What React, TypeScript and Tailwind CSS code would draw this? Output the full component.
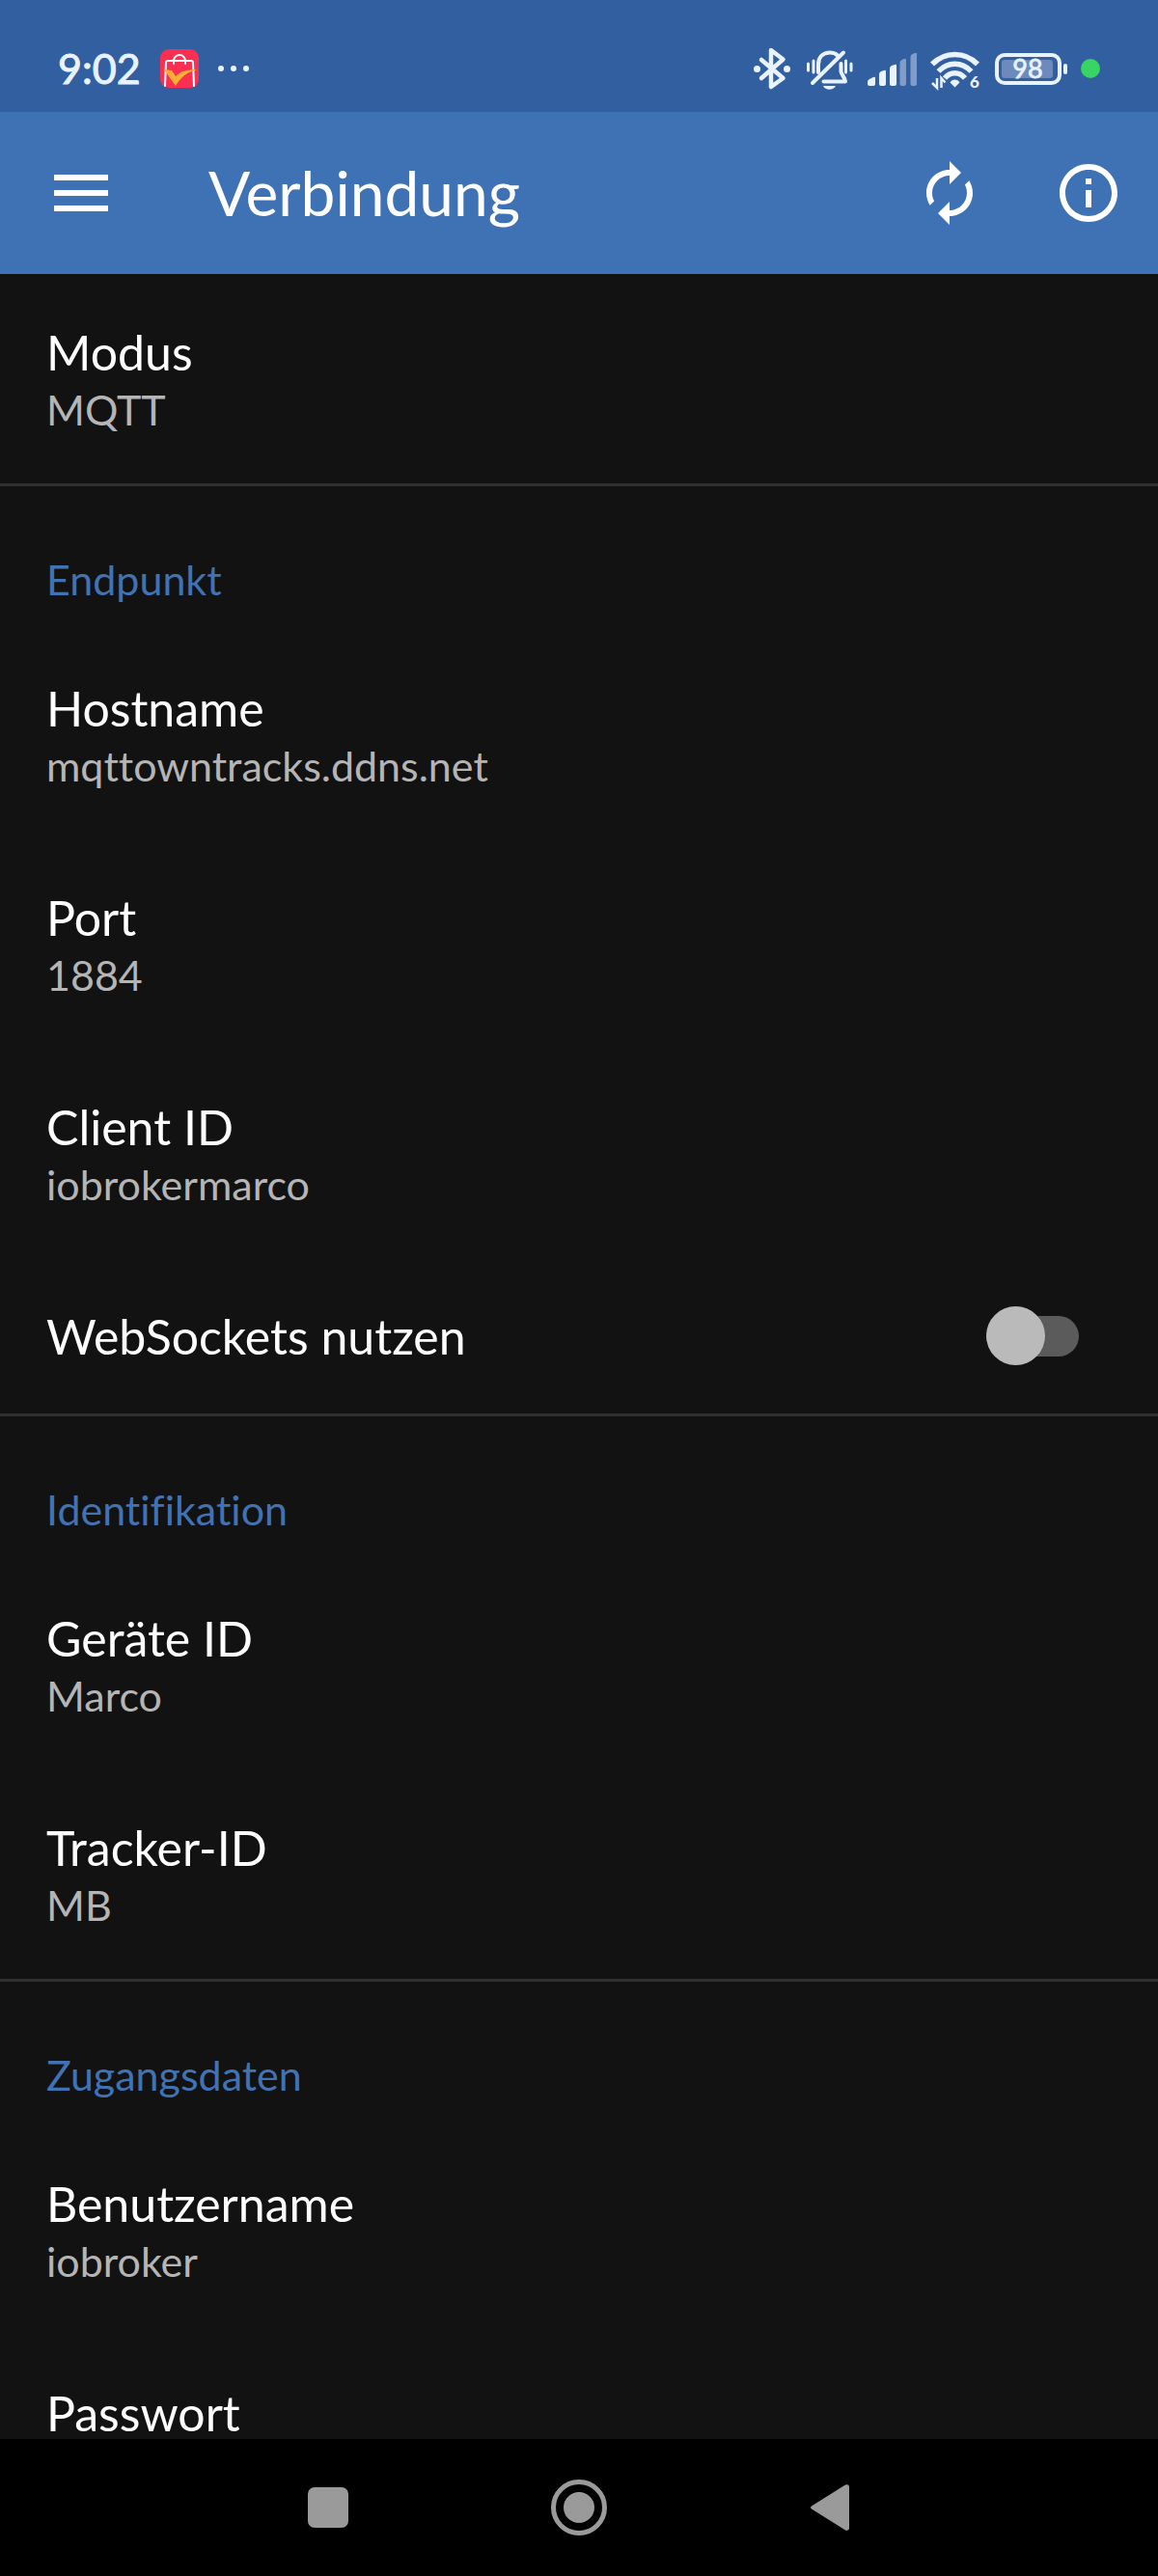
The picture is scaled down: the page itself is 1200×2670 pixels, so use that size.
import React, { useState } from "react";

type Item = {
  title: string;
  summary?: string;
  toggle?: boolean;
};

type Group = {
  heading?: string;
  items: Item[];
};

const groups: Group[] = [
  { items: [{ title: "Modus", summary: "MQTT" }] },
  {
    heading: "Endpunkt",
    items: [
      { title: "Hostname", summary: "mqttowntracks.ddns.net" },
      { title: "Port", summary: "1884" },
      { title: "Client ID", summary: "iobrokermarco" },
      { title: "WebSockets nutzen", toggle: true },
    ],
  },
  {
    heading: "Identifikation",
    items: [
      { title: "Geräte ID", summary: "Marco" },
      { title: "Tracker-ID", summary: "MB" },
    ],
  },
  {
    heading: "Zugangsdaten",
    items: [
      { title: "Benutzername", summary: "iobroker" },
      { title: "Passwort" },
    ],
  },
];

const ShopIcon = () => (
  <svg width="40" height="40" viewBox="0 0 40 40" fill="none">
    <rect width="40" height="40" rx="9" fill="#fb2f52" />
    <path
      d="M5 38l1-24a2 2 0 0 1 2-2h24a2 2 0 0 1 2 2l1 24M14 15v-3a6 6 0 0 1 12 0v3"
      stroke="#fff"
      strokeWidth="2"
      strokeLinecap="round"
    />
    <path d="M4 21l8 1 4 6c5-5 12-7 22-7-10 3-17 8-22 17z" fill="#fdb02f" />
  </svg>
);

const BluetoothIcon = () => (
  <svg width="38" height="44" viewBox="0 0 38 44" fill="none" className="overflow-visible">
    <path
      d="M7 13l22.500 19L17 41V3l12.500 9.500L7 32"
      stroke="#e9f2ff"
      strokeWidth="4.500"
      strokeLinecap="round"
      strokeLinejoin="round"
    />
    <circle cx="2.500" cy="22.500" r="3.500" fill="#e9f2ff" />
    <circle cx="33.500" cy="22.500" r="3.500" fill="#e9f2ff" />
  </svg>
);

const MutedIcon = () => (
  <svg
    width="48"
    height="44"
    viewBox="0 0 48 44"
    fill="none"
    stroke="#e9f2ff"
    strokeWidth="4"
    strokeLinecap="round"
    strokeLinejoin="round"
    className="overflow-visible"
  >
    <path d="M13 26v-8c0-8 5-12.500 12-12.500 3 0 6 1 8 3" />
    <path d="M36.500 17v8c0 3 4 6 4.500 10.500H18.500" />
    <path d="M39 5.500L7 37" />
    <path d="M2.500 17v7M8 14v12M41.500 14v12M47 17v7" strokeWidth="3" />
    <path d="M18 40h13c-2 5-11 5-13 0z" fill="#e9f2ff" stroke="none" />
  </svg>
);

const SignalIcon = () => (
  <svg width="52" height="44" viewBox="0 0 52 44" fill="#e9f2ff">
    <path d="M1 36q0-2 2-3l4-2q2-1 2 1v6q0 2-2 2H3q-2 0-2-2z" />
    <path d="M13 28q0-2 2-3l3-1q2-1 2 1v13q0 2-2 2h-3q-2 0-2-2z" />
    <path d="M24 22q0-2 2-3l3-1q2-1 2 1v19q0 2-2 2h-3q-2 0-2-2z" />
    <g fill="#809cca">
      <path d="M34.500 16q0-2 2-3l2.500-1q2-1 2 1v25q0 2-2 2h-2.500q-2 0-2-2z" />
      <path d="M45.500 10q0-2 2-3l2.500-1q2-1 2 1v31q0 2-2 2h-2.500q-2 0-2-2z" />
    </g>
  </svg>
);

const WifiIcon = () => (
  <svg width="50" height="44" viewBox="0 0 50 44" fill="none" className="overflow-visible">
    <g stroke="#e9f2ff" strokeWidth="5.500">
      <path d="M1 17.500C14 4 35 4 48 17.500" />
      <path d="M7.500 25C17 14.500 32 14.500 41.500 25" />
      <path d="M14 32C20 25 29 25 35 32" />
    </g>
    <path d="M24.500 41.500l-5-5c2-4 8-4 10 0z" fill="#e9f2ff" />
    <path
      d="M6 32v10l-5-5M10.500 42V32l4 4.500"
      stroke="#e9f2ff"
      strokeWidth="2.500"
    />
    <text x="40" y="42" fontSize="17" fontWeight="900" fill="#e9f2ff">
      6
    </text>
  </svg>
);

const BatteryIcon = () => (
  <svg width="75" height="44" viewBox="0 0 75 44" fill="none" className="overflow-visible">
    <rect x="3" y="8" width="65" height="29" rx="8" stroke="#e9f2ff" strokeWidth="4" />
    <rect x="8" y="13" width="53" height="19" rx="3" fill="#6d8abc" />
    <rect x="72" y="17" width="4" height="11" rx="2" fill="#e9f2ff" />
    <text
      x="35"
      y="32"
      fontSize="27"
      textAnchor="middle"
      fill="#e9f2ff"
      stroke="#e9f2ff"
      strokeWidth="0.800"
    >
      98
    </text>
  </svg>
);

const StatusBar = () => (
  <div className="flex h-[116px] shrink-0 items-center justify-between bg-[#315f9f] px-[60px] pt-[26px]">
    <div className="flex items-center">
      <span className="text-[43px] leading-[52px] text-[#e9f2ff] [-webkit-text-stroke:1px_#e9f2ff]">
        9:02
      </span>
      <div className="ml-5">
        <ShopIcon />
      </div>
      <div className="ml-5 flex gap-[7px]">
        <span className="size-[6px] rounded-full bg-[#e9f2ff]" />
        <span className="size-[6px] rounded-full bg-[#e9f2ff]" />
        <span className="size-[6px] rounded-full bg-[#e9f2ff]" />
      </div>
    </div>
    <div className="flex items-center gap-[15px]">
      <BluetoothIcon />
      <MutedIcon />
      <SignalIcon />
      <WifiIcon />
      <BatteryIcon />
      <span className="size-5 rounded-full bg-[#39d564]" />
    </div>
  </div>
);

const AppBar = () => (
  <header className="flex h-[168px] shrink-0 items-center bg-[#3f72b4] pr-9 pl-14 text-white">
    <button type="button" aria-label="Menü" className="flex flex-col gap-[10px]">
      <span className="h-[6px] w-14 bg-white" />
      <span className="h-[6px] w-14 bg-white" />
      <span className="h-[6px] w-14 bg-white" />
    </button>
    <h1 className="ml-[104px] flex-1 text-[64px] leading-[76px]">Verbindung</h1>
    <div className="flex gap-[72px]">
      <button type="button" aria-label="Neu verbinden">
        <svg width="72" height="72" viewBox="0 0 24 24" fill="currentColor">
          <path d="M12 6v3l4-4-4-4v3c-4.420 0-8 3.580-8 8 0 1.570.46 3.030 1.240 4.260L6.700 14.800c-.45-.83-.7-1.790-.7-2.800 0-3.310 2.690-6 6-6zm6.760 1.740L17.300 9.200c.44.84.7 1.790.7 2.800 0 3.310-2.690 6-6 6v-3l-4 4 4 4v-3c4.420 0 8-3.580 8-8 0-1.570-.46-3.030-1.240-4.260z" />
        </svg>
      </button>
      <button type="button" aria-label="Info">
        <svg width="72" height="72" viewBox="0 0 24 24" fill="currentColor">
          <path d="M11 7h2v2h-2zm0 4h2v6h-2zm1-9C6.480 2 2 6.480 2 12s4.480 10 10 10 10-4.480 10-10S17.520 2 12 2zm0 18c-4.410 0-8-3.590-8-8s3.590-8 8-8 8 3.590 8 8-3.590 8-8 8z" />
        </svg>
      </button>
    </div>
  </header>
);

const ToggleRow = ({ title }: { title: string }) => {
  const [on, setOn] = useState(false);

  return (
    <label className="flex min-h-[161px] items-center justify-between pr-[82px] pl-12">
      <span className="text-[50px] leading-[54px] text-white">{title}</span>
      <input
        type="checkbox"
        role="switch"
        checked={on}
        onChange={(e) => setOn(e.target.checked)}
        className="flex h-[42px] w-24 appearance-none items-center rounded-full bg-[#5b5b5b] before:size-[61px] before:shrink-0 before:rounded-full before:bg-[#bababa] checked:justify-end checked:before:bg-[#3f72b4]"
      />
    </label>
  );
};

const Row = ({ title, summary }: Item) => (
  <button type="button" className="block w-full px-12 pt-[54px] pb-12 text-left">
    <span className="block text-[50px] leading-[54px] text-white">{title}</span>
    {summary && (
      <span className="mt-1 block text-[43px] leading-[57px] text-[#b5b5b5]">
        {summary}
      </span>
    )}
  </button>
);

const NavBar = () => (
  <nav className="flex h-[142px] shrink-0 items-center justify-center gap-[200px] bg-black text-[#9a9a9a]">
    <button type="button" aria-label="Letzte Apps" className="flex w-[60px] justify-center">
      <span className="size-[42px] rounded-[7px] bg-[#9a9a9a]" />
    </button>
    <button type="button" aria-label="Startseite" className="flex w-[60px] justify-center">
      <svg width="60" height="60" viewBox="0 0 60 60" fill="none">
        <circle cx="30" cy="30" r="26.500" stroke="currentColor" strokeWidth="5" />
        <circle cx="30" cy="30" r="16" fill="currentColor" />
      </svg>
    </button>
    <button type="button" aria-label="Zurück" className="flex w-[60px] justify-center">
      <svg width="40" height="48" viewBox="0 0 40 48" fill="currentColor">
        <path d="M1 22.500L36 .5q4-1 4 2v43q0 3-4 2L1 25.500q-2-1.500 0-3z" />
      </svg>
    </button>
  </nav>
);

export default function App() {
  return (
    <div className="flex h-screen flex-col bg-[#121212] font-[Lato,sans-serif] [font-variant-ligatures:none]">
      <StatusBar />
      <AppBar />
      <main className="min-h-0 flex-1 overflow-y-auto [scrollbar-width:none]">
        {groups.map((group, i) => (
          <section key={i}>
            {group.heading && (
              <h2 className="border-t-[3px] border-[#303030] px-12 pt-[68px] pb-6 text-[43px] leading-[57px] text-[#4072b4]">
                {group.heading}
              </h2>
            )}
            {group.items.map((item) =>
              item.toggle ? (
                <ToggleRow key={item.title} title={item.title} />
              ) : (
                <Row key={item.title} {...item} />
              )
            )}
          </section>
        ))}
      </main>
      <NavBar />
    </div>
  );
}
